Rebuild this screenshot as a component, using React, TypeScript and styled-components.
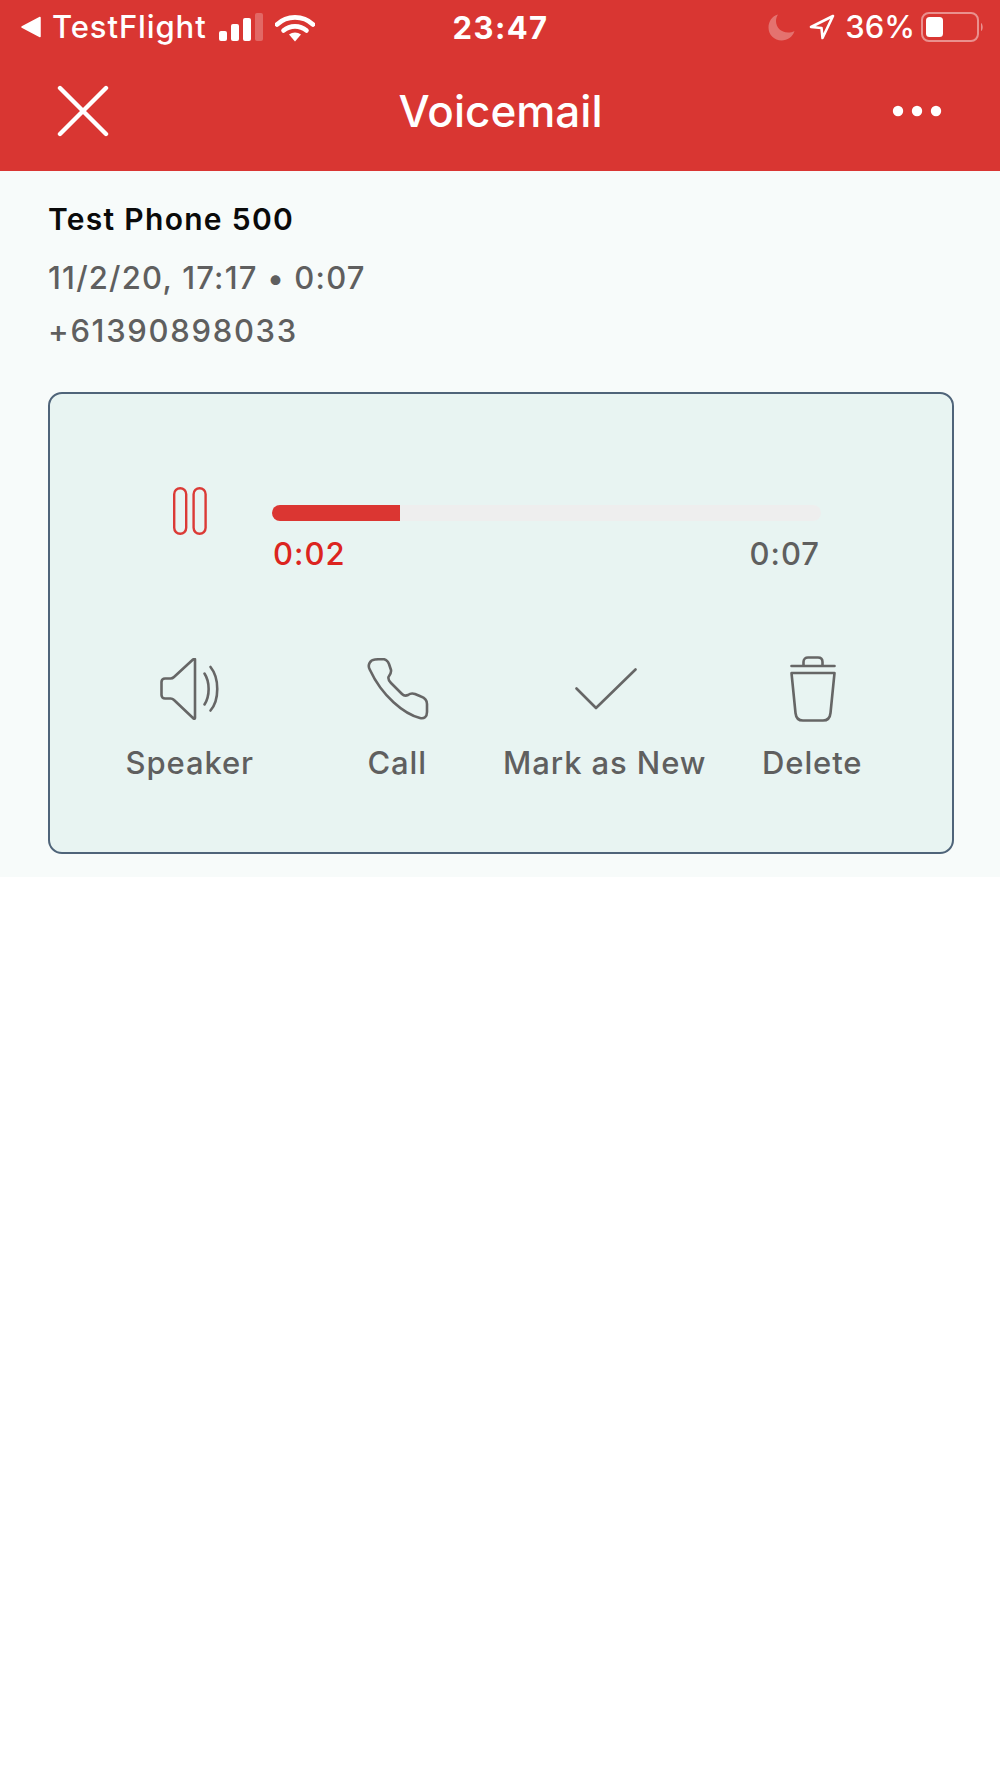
import styled, { createGlobalStyle } from 'styled-components';

const GlobalStyle = createGlobalStyle`
	html,
	body {
		margin: 0;
		padding: 0;
		background: #ffffff;
	}
	body {
		font-family: Inter, 'Liberation Sans', sans-serif;
		-webkit-font-smoothing: antialiased;
	}
`;

const BackIcon = () => (
	<svg width='22' height='22' viewBox='0 0 22 22'>
		<path d='M20 1.5 V20.5 L2 11 Z' fill='#fff' stroke='#fff' strokeWidth='1.5' strokeLinejoin='round' />
	</svg>
);

const SignalIcon = () => (
	<svg width='44' height='28' viewBox='0 0 44 28'>
		<rect x='0' y='18' width='8' height='10' rx='2' fill='#fff' />
		<rect x='12' y='11' width='8' height='17' rx='2' fill='#fff' />
		<rect x='24' y='5' width='8' height='23' rx='2' fill='#fff' />
		<rect x='36' y='0' width='8' height='28' rx='2' fill='#fff' fillOpacity='0.25' />
	</svg>
);

const WifiIcon = () => (
	<svg width='40' height='29' viewBox='0 0 40 29'>
		<path d='M2 11.5 C12 2 28 2 38 11.5' fill='none' stroke='#fff' strokeWidth='4.6' strokeLinecap='round' />
		<path d='M8.5 17.5 C15 12 25 12 31.5 17.5' fill='none' stroke='#fff' strokeWidth='4.6' strokeLinecap='round' />
		<path d='M14 21.5 C17.5 18.7 22.5 18.7 26 21.5 L20 28.5 Z' fill='#fff' />
	</svg>
);

const MoonIcon = () => (
	<svg width='27' height='27' viewBox='0 0 27 27'>
		<path d='M10 0.5 C4 2 0.5 7.5 0.5 13.5 C0.5 21 6.5 26.5 13.5 26.5 C19.5 26.5 24.5 23 26.5 17 C24.5 18 22.5 18.5 20 18.5 C13 18.5 8 13.5 8 7 C8 4.5 8.8 2.3 10 0.5 Z' fill='#fff' fillOpacity='0.3' />
	</svg>
);

const LocationIcon = () => (
	<svg width='26' height='26' viewBox='0 0 26 26'>
		<path d='M24 2 L2 13 L12.5 14 L13.5 24 Z' fill='none' stroke='#fff' strokeWidth='2.6' strokeLinejoin='round' />
	</svg>
);

const BatteryIcon = () => (
	<svg width='64' height='32' viewBox='0 0 64 32'>
		<rect x='1' y='2' width='56' height='28' rx='7' fill='none' stroke='#fff' strokeOpacity='0.45' strokeWidth='2' />
		<rect x='5' y='6' width='17' height='20' rx='3.5' fill='#fff' />
		<path d='M60 12 C62 13 62.5 19 60 20 Z' fill='#fff' fillOpacity='0.45' />
	</svg>
);

const CloseIcon = () => (
	<svg width='52' height='52' viewBox='0 0 52 52'>
		<path d='M3 3 L49 49 M49 3 L3 49' stroke='#fff' strokeWidth='4.4' strokeLinecap='round' />
	</svg>
);

const MoreIcon = () => (
	<svg width='50' height='12' viewBox='0 0 50 12'>
		<circle cx='6' cy='6' r='5.2' fill='#fff' />
		<circle cx='25' cy='6' r='5.2' fill='#fff' />
		<circle cx='44' cy='6' r='5.2' fill='#fff' />
	</svg>
);

const PauseIcon = () => (
	<svg width='34' height='48' viewBox='0 0 34 48'>
		<rect x='1.2' y='1.2' width='12' height='45.6' rx='6' fill='none' stroke='#db3a36' strokeWidth='2.4' />
		<rect x='20.6' y='1.2' width='12' height='45.6' rx='6' fill='none' stroke='#db3a36' strokeWidth='2.4' />
	</svg>
);

const SpeakerIcon = () => (
	<svg width='62' height='62' viewBox='0 0 62 62' fill='none' stroke='#666' strokeWidth='2.6' strokeLinejoin='round' strokeLinecap='round'>
		<path d='M35 1.5 V60 C35 61 34 61 33 60 L14 42 C13 41 12 40.5 10.5 40.5 H5 C3 40.5 1.5 39 1.5 37 V24 C1.5 22 3 20.5 5 20.5 H10.5 C12 20.5 13 20 14 19 L33 1.5 C34 0.8 35 0.8 35 1.5 Z' />
		<path d='M44.5 15.5 C50 24 50 38 44.5 46.5' />
		<path d='M50.5 9 C59.5 20 59.5 42 50.5 52.5' />
	</svg>
);

const PhoneIcon = () => (
	<svg width='62' height='62' viewBox='0 0 62 62' fill='none' stroke='#666' strokeWidth='2.6' strokeLinejoin='round'>
		<path d='M3 12 C0 7 3 2 8 1.5 L15 1 C19 1 21 3.5 22 6 L24 12 C24.5 15 23 17 21.5 19 C21 21 22 23 24 25 L35 36 C37 38 39 38 41 37 C43 35.5 45 35 48 36 L54 38.5 C58 40 60 42.5 60 46 V54 C60 59 57 61 53 60 C37 56 15 38 3 12 Z' />
	</svg>
);

const CheckIcon = () => (
	<svg width='62' height='42' viewBox='0 0 62 42' fill='none' stroke='#666' strokeWidth='2.6' strokeLinejoin='round' strokeLinecap='round'>
		<path d='M1.5 20.5 L21 40 L60.5 1.5' />
	</svg>
);

const TrashIcon = () => (
	<svg width='46' height='66' viewBox='0 0 46 66' fill='none' stroke='#666' strokeWidth='2.6' strokeLinejoin='round' strokeLinecap='round'>
		<path d='M1.5 10 H44.5' />
		<path d='M13.5 9 V6 C13.5 3 15.5 1.5 18 1.5 H28 C30.5 1.5 32.5 3 32.5 6 V9' />
		<path d='M1.5 17 H44.5 L40.5 57 C40 62 37.5 64.5 33 64.5 H13 C8.5 64.5 6 62 5.5 57 Z' />
	</svg>
);

const actions = [
	{ label: 'Speaker', icon: <SpeakerIcon /> },
	{ label: 'Call', icon: <PhoneIcon /> },
	{ label: 'Mark as New', icon: <CheckIcon /> },
	{ label: 'Delete', icon: <TrashIcon /> },
];

const App = () => {
	const progress = 23.4;
	return (
		<>
			<GlobalStyle />
			<StyledHeader>
				<StyledStatusBar>
					<StyledStatusLeft>
						<BackIcon />
						<StyledCarrier>TestFlight</StyledCarrier>
						<SignalIcon />
						<WifiIcon />
					</StyledStatusLeft>
					<StyledClock>23:47</StyledClock>
					<StyledStatusRight>
						<MoonIcon />
						<LocationIcon />
						<StyledPercent>36%</StyledPercent>
						<BatteryIcon />
					</StyledStatusRight>
				</StyledStatusBar>
				<StyledNav>
					<CloseIcon />
					<StyledTitle>Voicemail</StyledTitle>
					<MoreIcon />
				</StyledNav>
			</StyledHeader>
			<StyledContent>
				<StyledName>Test Phone 500</StyledName>
				<StyledMeta>11/2/20, 17:17 • 0:07</StyledMeta>
				<StyledPhone>+61390898033</StyledPhone>
				<StyledCard>
					<StyledPlayer>
						<StyledPause>
							<PauseIcon />
						</StyledPause>
						<StyledTimeline>
							<StyledTrack>
								<StyledFill style={{ width: `${progress}%` }} />
							</StyledTrack>
							<StyledTimes>
								<StyledTime $active>0:02</StyledTime>
								<StyledTime>0:07</StyledTime>
							</StyledTimes>
						</StyledTimeline>
					</StyledPlayer>
					<StyledActions>
						{actions.map((action) => (
							<StyledAction key={action.label}>
								<StyledActionIcon>{action.icon}</StyledActionIcon>
								<StyledActionLabel>{action.label}</StyledActionLabel>
							</StyledAction>
						))}
					</StyledActions>
				</StyledCard>
			</StyledContent>
		</>
	);
};

export default App;

const StyledHeader = styled.header`
	display: flex;
	flex-direction: column;
	height: 171px;
	background: #d93632;
	color: #ffffff;
`;

const StyledStatusBar = styled.div`
	display: grid;
	grid-template-columns: 1fr auto 1fr;
	align-items: center;
	height: 54px;
	padding: 0 15px 0 20px;
`;

const StyledStatusLeft = styled.div`
	display: flex;
	align-items: center;
	svg:nth-of-type(2) {
		margin-left: 12px;
	}
	svg:nth-of-type(3) {
		margin-left: 12px;
	}
`;

const StyledCarrier = styled.span`
	margin-left: 10px;
	font-size: 31px;
	font-weight: 500;
	letter-spacing: 0.9px;
	line-height: 36px;
`;

const StyledClock = styled.span`
	margin: 1px 4px 0 0;
	font-size: 31px;
	font-weight: 700;
	letter-spacing: 1.4px;
	line-height: 36px;
`;

const StyledStatusRight = styled.div`
	display: flex;
	align-items: center;
	justify-content: flex-end;
	svg:nth-of-type(2) {
		margin-left: 14px;
	}
	svg:nth-of-type(3) {
		margin-left: 6px;
	}
`;

const StyledPercent = styled.span`
	margin-left: 10px;
	font-size: 31px;
	font-weight: 500;
	line-height: 36px;
`;

const StyledNav = styled.nav`
	display: flex;
	align-items: center;
	justify-content: space-between;
	height: 117px;
	box-sizing: border-box;
	padding: 8px 58px 11px 57px;
`;

const StyledTitle = styled.h1`
	margin: 0;
	font-size: 44px;
	font-weight: 500;
	line-height: 50px;
`;

const StyledContent = styled.main`
	display: flex;
	flex-direction: column;
	height: 706px;
	box-sizing: border-box;
	padding: 30px 46px 0 48px;
	background: #f7fbfa;
`;

const StyledName = styled.div`
	font-size: 30px;
	font-weight: 600;
	letter-spacing: 1.3px;
	line-height: 36px;
	color: #0a0a0a;
`;

const StyledMeta = styled.div`
	margin-top: 23px;
	font-size: 31px;
	font-weight: 500;
	letter-spacing: 1.2px;
	line-height: 36px;
	color: #5f5f5f;
`;

const StyledPhone = styled.div`
	margin-top: 17px;
	font-size: 31px;
	font-weight: 500;
	letter-spacing: 1.7px;
	line-height: 36px;
	color: #5f5f5f;
`;

const StyledCard = styled.section`
	display: flex;
	flex-direction: column;
	box-sizing: border-box;
	height: 462px;
	margin-top: 43px;
	padding: 93px 36px 0;
	background: #e8f4f2;
	border: 2px solid #4f6479;
	border-radius: 14px;
`;

const StyledPlayer = styled.div`
	display: flex;
	align-items: flex-start;
`;

const StyledPause = styled.div`
	display: flex;
	justify-content: center;
	width: 186px;
	padding-left: 22px;
	box-sizing: border-box;
`;

const StyledTimeline = styled.div`
	display: flex;
	flex-direction: column;
	width: 549px;
	margin-top: 18px;
`;

const StyledTrack = styled.div`
	height: 16px;
	border-radius: 8px;
	background: #eeeeee;
	overflow: hidden;
`;

const StyledFill = styled.div`
	height: 100%;
	background: #db3632;
`;

const StyledTimes = styled.div`
	display: flex;
	justify-content: space-between;
	margin-top: 15px;
	padding: 0 1px;
`;

const StyledTime = styled.span<{ $active?: boolean }>`
	font-size: 31px;
	font-weight: 500;
	letter-spacing: 1px;
	line-height: 36px;
	color: ${({ $active }) => ($active ? '#dc2420' : '#5f5f5f')};
`;

const StyledActions = styled.div`
	display: grid;
	grid-template-columns: repeat(4, 1fr);
	margin-top: 84px;
`;

const StyledAction = styled.div`
	display: flex;
	flex-direction: column;
	align-items: center;
`;

const StyledActionIcon = styled.div`
	display: flex;
	align-items: center;
	justify-content: center;
	height: 66px;
	margin-left: 2px;
`;

const StyledActionLabel = styled.span`
	margin-top: 23px;
	font-size: 31px;
	font-weight: 500;
	letter-spacing: 0.9px;
	line-height: 36px;
	color: #5f5f5f;
	white-space: nowrap;
`;
